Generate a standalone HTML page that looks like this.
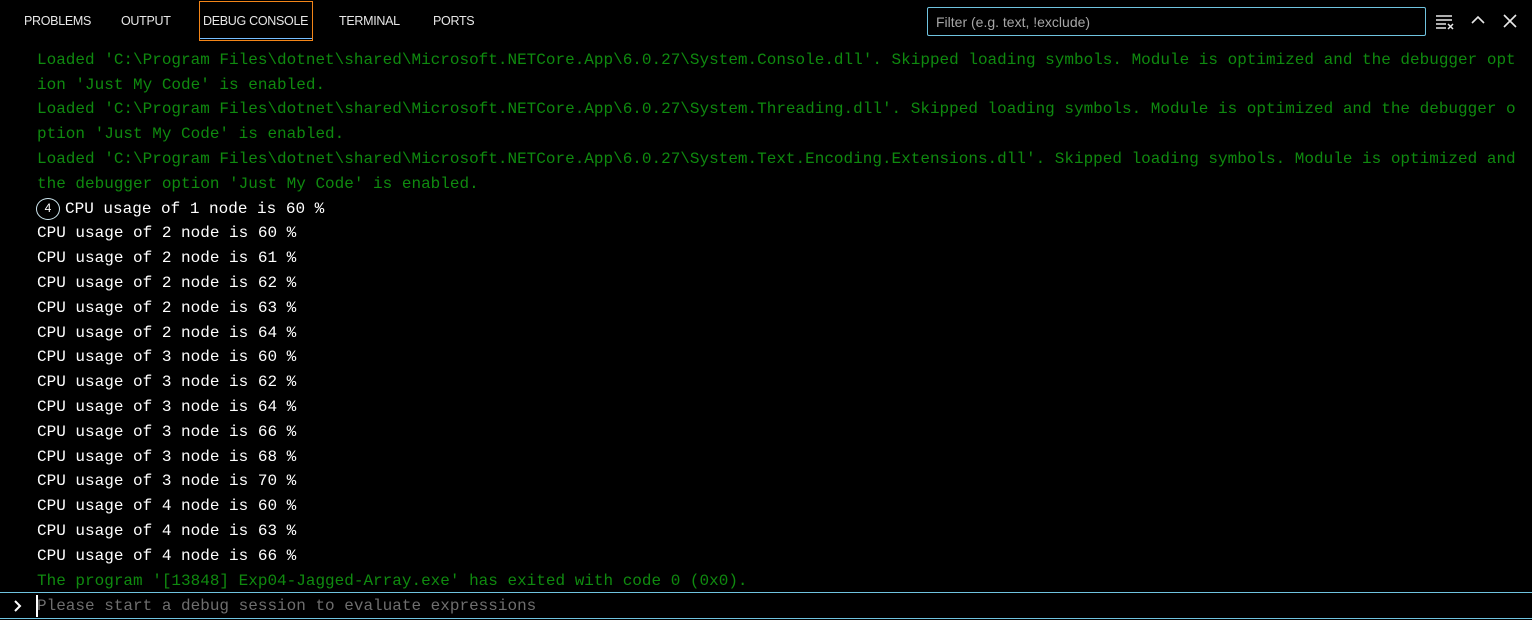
<!DOCTYPE html>
<html><head><style>
body{margin:0;width:1532px;height:620px;background:#000;overflow:hidden;position:relative;font-family:"Liberation Sans",sans-serif}
.tab{position:absolute;top:14px;font-size:12.5px;color:#e7e7e7;letter-spacing:-0.3px}
#dbg{position:absolute;left:199px;top:1px;width:114px;height:40px;border:1px solid #f38518;box-sizing:border-box}
#dbg:after{content:"";position:absolute;left:0;right:0;bottom:1px;height:1px;background:#75beff}
#filter{position:absolute;left:927px;top:7px;width:499px;height:29px;border:1px solid #6fc3df;border-radius:2px;box-sizing:border-box;color:#a6a6a6;font-size:14px;padding:6px 0 0 8px}
#out{position:absolute;left:37px;font-family:"Liberation Mono",monospace;font-size:16px;line-height:24.8px;white-space:pre;color:#fff}
.g{color:#0f8a0f}
#clip{position:absolute;left:0;top:44px;width:1532px;height:548px;overflow:hidden}
#clip #out{top:3.8px}
#inp{position:absolute;left:0;top:592px;width:1532px;height:25px;border-top:1px solid #6fc3df;border-bottom:1px solid #6fc3df;box-sizing:content-box}
#inp span{position:absolute;left:37px;top:1px;font-family:"Liberation Mono",monospace;font-size:16px;color:#6e6e6e;line-height:24px}
#cursor{position:absolute;left:36px;top:2px;width:2px;height:22px;background:#fff}
.c4{display:inline-block;width:24px;height:22px;border:1.5px solid #cfe8f0;border-radius:50%;box-sizing:border-box;font-size:12px;text-align:center;line-height:19px;font-family:"Liberation Sans",sans-serif;vertical-align:top;margin-top:1px;margin-right:5px;margin-left:-1px;line-height:19px}
.l4{display:inline-block;height:24.8px;vertical-align:top}
</style></head><body>
<div class="tab" style="left:24px">PROBLEMS</div>
<div class="tab" style="left:121px">OUTPUT</div>
<div id="dbg"></div>
<div class="tab" style="left:203px">DEBUG CONSOLE</div>
<div class="tab" style="left:339px">TERMINAL</div>
<div class="tab" style="left:433px">PORTS</div>
<div id="filter">Filter (e.g. text, !exclude)</div>
<svg style="position:absolute;left:1435px;top:14px" width="20" height="16" viewBox="0 0 20 16" fill="none" stroke="#e7e7e7" stroke-width="1.5"><path d="M1 2h16M1 6h16M1 10h10M1 14h10M13 10l5 5M18 10l-5 5"/></svg>
<svg style="position:absolute;left:1470px;top:14px" width="16" height="12" viewBox="0 0 16 12" fill="none" stroke="#e7e7e7" stroke-width="1.6"><path d="M2 9l6-6 6 6"/></svg>
<svg style="position:absolute;left:1502px;top:13px" width="16" height="16" viewBox="0 0 16 16" fill="none" stroke="#e7e7e7" stroke-width="1.6"><path d="M2 2l12 12M14 2L2 14"/></svg>
<div id="clip"><div id="out"><span class="g" style="position:relative;top:-24.8px;display:block;height:0">Loaded 'C:\Program Files\dotnet\shared\Microsoft.NETCore.App\6.0.27\System.Collections.dll'. Skipped loading symbols. Module is optimized and the debugger op</span><span class="g">Loaded 'C:\Program Files\dotnet\shared\Microsoft.NETCore.App\6.0.27\System.Console.dll'. Skipped loading symbols. Module is optimized and the debugger opt
ion 'Just My Code' is enabled.
Loaded 'C:\Program Files\dotnet\shared\Microsoft.NETCore.App\6.0.27\System.Threading.dll'. Skipped loading symbols. Module is optimized and the debugger o
ption 'Just My Code' is enabled.
Loaded 'C:\Program Files\dotnet\shared\Microsoft.NETCore.App\6.0.27\System.Text.Encoding.Extensions.dll'. Skipped loading symbols. Module is optimized and
the debugger option 'Just My Code' is enabled.</span>
<span class="c4">4</span>CPU usage of 1 node is 60 %
CPU usage of 2 node is 60 %
CPU usage of 2 node is 61 %
CPU usage of 2 node is 62 %
CPU usage of 2 node is 63 %
CPU usage of 2 node is 64 %
CPU usage of 3 node is 60 %
CPU usage of 3 node is 62 %
CPU usage of 3 node is 64 %
CPU usage of 3 node is 66 %
CPU usage of 3 node is 68 %
CPU usage of 3 node is 70 %
CPU usage of 4 node is 60 %
CPU usage of 4 node is 63 %
CPU usage of 4 node is 66 %
<span class="g">The program '[13848] Exp04-Jagged-Array.exe' has exited with code 0 (0x0).</span></div></div>
<div id="inp"><svg style="position:absolute;left:13px;top:7px" width="10" height="12" viewBox="0 0 10 12" fill="none" stroke="#fff" stroke-width="2"><path d="M2 1l5 5-5 5"/></svg><div id="cursor"></div><span>Please start a debug session to evaluate expressions</span></div>
</body></html>
